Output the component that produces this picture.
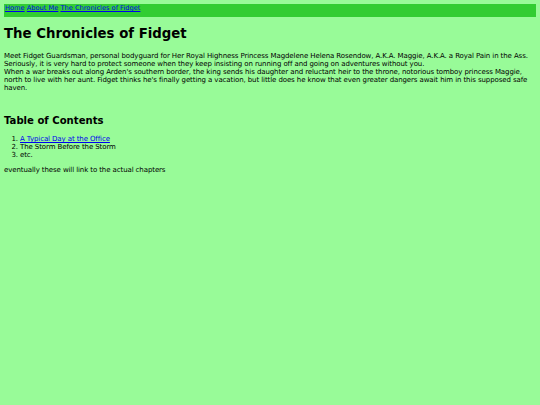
import React from 'react';

const App: React.FC = () => {
  return (
    <div className="min-h-[405px] bg-[#98fb98] p-[4px] text-black [font-family:'DejaVu_Sans',Verdana,sans-serif]">
      {/* Nav bar */}
      <div className="h-[13px] bg-[#32cd32] text-[6.65px] leading-[9px] pl-[1px]">
        <a href="#" className="text-[#0000ee] underline">Home</a>{' '}
        <a href="#" className="text-[#0000ee] underline">About Me</a>{' '}
        <a href="#" className="text-[#0000ee] underline">The Chronicles of Fidget</a>
      </div>

      <h1 className="mt-[8px] text-[13.3px] leading-[17px] font-bold">The Chronicles of Fidget</h1>

      <p className="mt-[10px] text-[7px] leading-[8px] tracking-[-0.1px]">
        Meet Fidget Guardsman, personal bodyguard for Her Royal Highness Princess Magdelene Helena Rosendow, A.K.A. Maggie, A.K.A. a Royal Pain in the Ass.
        <br />
        Seriously, it is very hard to protect someone when they keep insisting on running off and going on adventures without you.
        <br />
        When a war breaks out along Arden's southern border, the king sends his daughter and reluctant heir to the throne, notorious tomboy princess Maggie, north to live with her aunt. Fidget thinks he's finally getting a vacation, but little does he know that even greater dangers await him in this supposed safe haven.
      </p>

      <h2 className="mt-[22px] text-[10.1px] leading-[14px] font-bold">Table of Contents</h2>

      <ol className="mt-[7px] list-decimal pl-[16px] text-[7px] leading-[8px] tracking-[-0.1px]">
        <li><a href="#" className="text-[#0000ee] underline">A Typical Day at the Office</a></li>
        <li>The Storm Before the Storm</li>
        <li>etc.</li>
      </ol>

      <p className="mt-[7px] text-[7px] leading-[8px] tracking-[-0.1px]">eventually these will link to the actual chapters</p>
    </div>
  );
};

export default App;
